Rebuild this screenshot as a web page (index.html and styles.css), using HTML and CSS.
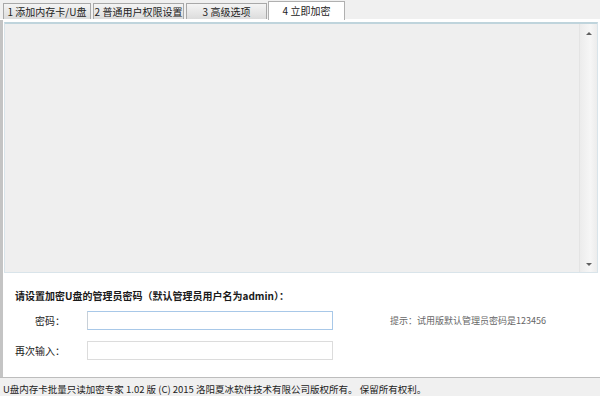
FILE: index.html
```html
<!DOCTYPE html>
<html lang="zh-CN">
<head>
    <meta charset="UTF-8">
    <title>U盘内存卡批量只读加密专家</title>
    <link rel="stylesheet" href="styles.css">
</head>
<body>
    <div class="window">
        <div class="tabs">
            <div class="tab t1">1 添加内存卡/U盘</div>
            <div class="tab t2">2 普通用户权限设置</div>
            <div class="tab t3">3 高级选项</div>
            <div class="tab active">4 立即加密</div>
        </div>
        <div class="page">
            <div class="list">
                <div class="list-body"></div>
                <div class="scrollbar">
                    <span class="arrow up"></span>
                    <span class="arrow down"></span>
                </div>
            </div>
            <div class="form">
                <p class="title">请设置加密U盘的管理员密码（默认管理员用户名为admin）：</p>
                <div class="row">
                    <label class="label pad">密码：</label>
                    <input class="field focus" type="password">
                    <span class="hint">提示：试用版默认管理员密码是123456</span>
                </div>
                <div class="row">
                    <label class="label">再次输入：</label>
                    <input class="field" type="password">
                </div>
            </div>
        </div>
        <div class="status">U盘内存卡批量只读加密专家 1.02 版 (C) 2015 洛阳夏冰软件技术有限公司版权所有。 保留所有权利。</div>
    </div>
</body>
</html>
```

FILE: styles.css
```css
body {
    margin: 0;
    padding: 0;
    font-family: "Noto Sans CJK SC", "Liberation Sans", sans-serif;
    font-size: 10px;
    color: #222;
    background: #f0f0f0;
}
.window {
    width: 600px;
    height: 396px;
    overflow: hidden;
    display: flex;
    flex-direction: column;
    background: #f0f0f0;
}
.tabs {
    display: flex;
    align-items: flex-end;
    height: 19px;
    padding-left: 3px;
    border-bottom: 1px solid #fff;
}
.tab {
    box-sizing: border-box;
    height: 16px;
    line-height: 15px;
    margin-right: 2px;
    border: 1px solid #a8a8a8;
    border-bottom: none;
    background: linear-gradient(#f4f4f4, #dcdcdc);
    color: #222;
    text-align: center;
    white-space: nowrap;
}
.tab.t1 { width: 88px; }
.tab.t2 { width: 91px; }
.tab.t3 { width: 81px; }
.tab.active {
    width: 77px;
    height: 19px;
    margin-left: -1px;
    margin-bottom: -1px;
    background: #fff;
    border-color: #b0b0b0;
    line-height: 17px;
}
.page {
    flex: 1;
    display: flex;
    flex-direction: column;
    background: #fff;
    border-left: 3px solid #c4c4c4;
}
.list {
    height: 248px;
    margin: 2px 2px 0 1px;
    display: flex;
    border: 1px solid #d9e4ea;
    border-top: 2px solid #bfd4dc;
    background: #efefef;
}
.list-body {
    flex: 1;
}
.scrollbar {
    width: 17px;
    display: flex;
    flex-direction: column;
    justify-content: space-between;
    align-items: center;
    padding: 8px 0 6px;
    background: linear-gradient(90deg, #ececec, #f6f6f6 60%, #ececec);
    border-left: 1px solid #e4e4e4;
}
.arrow {
    width: 0;
    height: 0;
    border-left: 3px solid transparent;
    border-right: 3px solid transparent;
}
.arrow.up { border-bottom: 3px solid #606060; }
.arrow.down { border-top: 3px solid #606060; }
.form {
    flex: 1;
    padding: 15px 0 0 12px;
}
.title {
    margin: 0 0 8px;
    font-weight: bold;
    font-size: 10px;
    color: #1a1a1a;
}
.row {
    display: flex;
    align-items: center;
    height: 19px;
    margin-bottom: 11px;
}
.label {
    width: 72px;
    color: #222;
}
.label.pad {
    padding-left: 20px;
    width: 52px;
}
.field {
    width: 240px;
    height: 15px;
    padding: 1px 2px;
    border: 1px solid #dcdcdc;
    background: #fff;
    outline: none;
}
.field.focus {
    border-color: #a8c8e8;
    border-left-color: #c8d0d8;
}
.hint {
    margin-left: 57px;
    font-size: 9px;
    color: #666;
}
.status {
    height: 14px;
    border-top: 1px solid #bdbdbd;
    padding: 4px 0 0 3px;
    font-size: 9.5px;
    line-height: 14px;
    color: #222;
    white-space: nowrap;
    background: #f0f0f0;
}
```
